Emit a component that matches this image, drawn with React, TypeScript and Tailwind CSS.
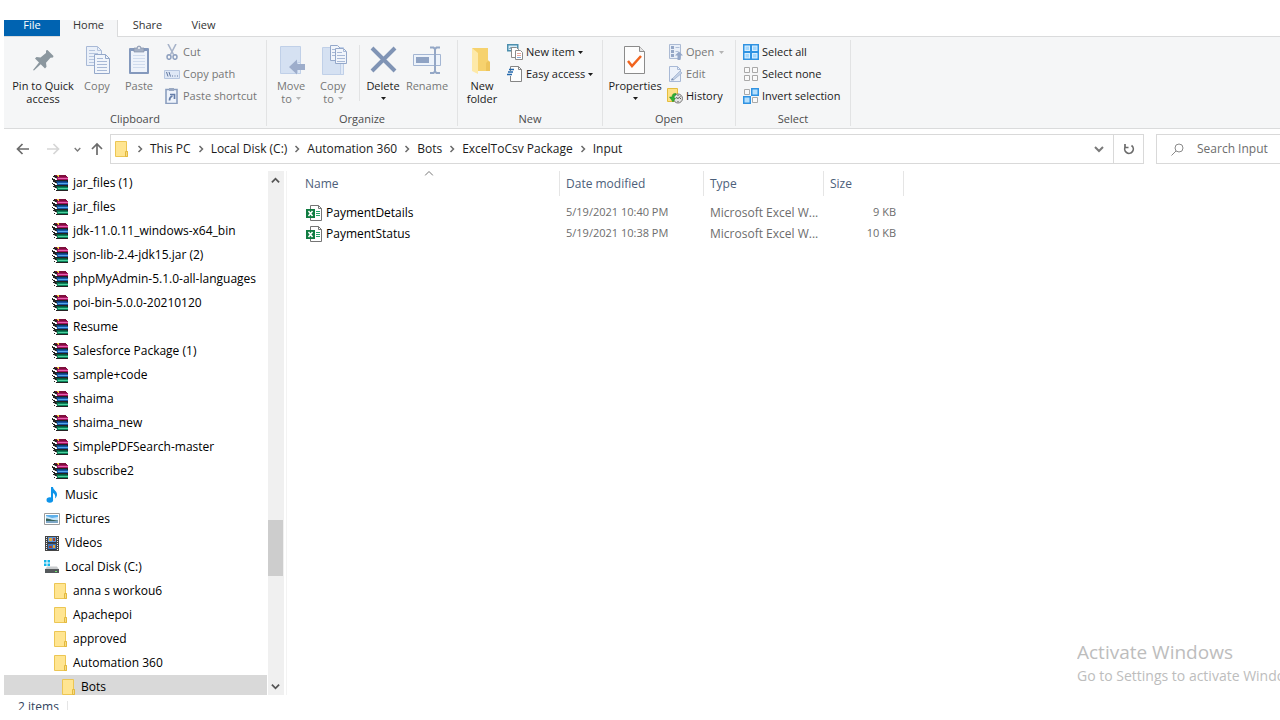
import React from 'react';

type IconType = React.FC;

interface TreeItem {
  name: string;
  icon: IconType;
  indent: string;
  selected?: boolean;
}

/* ---------- Ribbon icons ---------- */

const PinIcon = () => (
  <svg width="22" height="30" viewBox="0 0 22 30" fill="#8b979f">
    <path d="M1 25l6-7.500-4-4 1.500-1.500 4 .5L14 8V5.500L15.500 5l6 6-.5 1.500-2.500.3-4.500 5 .5 4L13 23.500l-4.300-4.300L2 25.500z" />
  </svg>
);

const CopyIcon = () => (
  <svg width="26" height="30" viewBox="0 0 26 30" fill="none">
    <path d="M2.500 1.500h11l4 4v15h-15z" fill="#eaf0f9" stroke="#a8b9d6" />
    <path d="M13.500 1.500v4h4M5 5.500h6M5 8.500h9M5 11.500h9M5 14.500h9M5 17.500h9" stroke="#b6c5de" />
    <path d="M10.500 9.500h11l4 4v15h-15z" fill="#f1f5fb" stroke="#94a8ca" />
    <path d="M21.500 9.500v4h4" stroke="#94a8ca" />
    <path d="M13 13.500h6M13 16.500h10M13 19.500h10M13 22.500h10M13 25.500h10" stroke="#a8b9d6" />
  </svg>
);

const PasteIcon = () => (
  <svg width="22" height="30" viewBox="0 0 22 30" fill="none">
    <rect x="1" y="3" width="20" height="26" rx="1" fill="#8499bd" />
    <rect x="3" y="6" width="16" height="21" fill="#eef3fb" />
    <path d="M5 10.500h12M5 13.500h12M5 16.500h12M5 19.500h12M5 22.500h12" stroke="#d0dcee" />
    <path d="M6 3h3a2 2 0 014 0h3v4H6z" fill="#a3afc4" stroke="#8592ac" strokeWidth=".7" />
    <circle cx="11" cy="3" r="1" fill="#f5f6f7" />
  </svg>
);

const MoveToIcon = () => (
  <svg width="28" height="30" viewBox="0 0 28 30">
    <path d="M3.500 1.500h20v27h-20z" fill="#d5e1f2" stroke="#c0d0e8" />
    <path d="M20.500 17.500h3v11h-3z" fill="#e0e9f6" stroke="#c0d0e8" />
    <path d="M12 22l8-7.500v4.500h8v6h-8v4.500z" fill="#9dadcb" />
  </svg>
);

const CopyToIcon = () => (
  <svg width="28" height="32" viewBox="0 0 28 32" fill="none">
    <path d="M3.500 3.500h21v27h-21z" fill="#d5e1f2" stroke="#c0d0e8" />
    <path d="M21.500 19.500h3v11h-3z" fill="#e0e9f6" stroke="#c0d0e8" />
    <path d="M11.500 1.500h7l3 3v12h-10z" fill="#f1f5fb" stroke="#94a8ca" />
    <path d="M13 5.500h4M13 8.500h4M13 11.500h4" stroke="#a8b9d6" />
    <path d="M16.500 4.500h8l3 3v12h-11z" fill="#f1f5fb" stroke="#94a8ca" />
    <path d="M24.500 4.500v3h3M18 8.500h5M18 11.500h8M18 14.500h8M18 17.500h8" stroke="#a8b9d6" />
  </svg>
);

const DeleteIcon = () => (
  <svg width="28" height="30" viewBox="0 0 28 30" fill="none">
    <path d="M3 3l23 23M26 3L3 26" stroke="#8094b5" strokeWidth="4" />
  </svg>
);

const RenameIcon = () => (
  <svg width="30" height="30" viewBox="0 0 30 30" fill="none">
    <path d="M1.500 9.500h27v11h-27z" fill="#edf3fb" stroke="#a4b6d3" />
    <path d="M4 12h13v6H4z" fill="#8fa3c4" />
    <path d="M18 2.500h3.500l1.500 1.500 1.500-1.500H28M18 28h3.500l1.500-1.500L24.500 28H28M23 3v24" stroke="#94a7c6" strokeWidth="2" />
  </svg>
);

const NewFolderIcon = () => (
  <svg width="22" height="30" viewBox="0 0 22 30">
    <path d="M1 3h16v12l2 2v9H5z" fill="#f6d26e" />
    <path d="M17 16l2 1v9h-4v-8z" fill="#edc45b" />
    <path d="M1 3l6 5v21l-6-3z" fill="#fde9a9" />
  </svg>
);

const PropertiesIcon = () => (
  <svg width="24" height="30" viewBox="0 0 24 30" fill="none">
    <path d="M1.500 1.500h15l5 5v22h-20z" fill="#fdfdfd" stroke="#8b8b8b" />
    <path d="M16.500 1.500v5h5" fill="#e4e4e4" stroke="#8b8b8b" />
    <path d="M5 16l4 5 9-10" stroke="#f1641e" strokeWidth="2.500" />
  </svg>
);

const CutIcon = () => (
  <svg width="16" height="16" viewBox="0 0 16 16" fill="none" stroke="#8d9fbe">
    <path d="M4 0l5.500 10.500M12 0L6.500 10.500" strokeWidth="1.600" stroke="#a7b3c9" />
    <ellipse cx="5" cy="13" rx="2" ry="2.300" strokeWidth="1.500" />
    <ellipse cx="11" cy="13" rx="2" ry="2.300" strokeWidth="1.500" />
  </svg>
);

const CopyPathIcon = () => (
  <svg width="16" height="16" viewBox="0 0 16 16" fill="none">
    <path d="M.5 4.500h15v8H.5z" fill="#dfe8f6" stroke="#b7c6df" />
    <path d="M2.500 6l1.500 4.500M5 6l1.500 4.500" stroke="#60779f" />
    <path d="M8 10h1M10.500 10h1M13 10h1" stroke="#60779f" />
  </svg>
);

const PasteShortcutIcon = () => (
  <svg width="16" height="16" viewBox="0 0 16 16" fill="none">
    <path d="M2 1.500h11v14H2z" fill="#eef3fb" stroke="#8b9ebf" strokeWidth="1.600" />
    <path d="M5 0h5v3H5z" fill="#9aa9c2" />
    <path d="M5.500 12.500c0-3 1-4 3-4.500M6 6.500h4.500V11" stroke="#647da8" strokeWidth="1.700" />
  </svg>
);

const NewItemIcon = () => (
  <svg width="16" height="16" viewBox="0 0 16 16" fill="none">
    <path d="M.75.75h10v6h-10z" fill="#d6eefa" stroke="#4c8fae" strokeWidth="1.500" />
    <path d="M2.500 5l2-2 2 2 1.500-1.500" stroke="#3c7796" />
    <path d="M4.500 3.500h5l2 2v8h-7z" fill="#fff" stroke="#8b8b8b" />
    <path d="M8.500 6.500h5l2 2v7h-7z" fill="#fff" stroke="#8b8b8b" />
    <path d="M10 9.500h4M10 11.500h4" stroke="#e7a59d" />
    <path d="M10 13.500h4" stroke="#89abd8" />
  </svg>
);

const EasyAccessIcon = () => (
  <svg width="16" height="16" viewBox="0 0 16 16" fill="none">
    <path d="M3.500 5V.5h8l3 3v12h-11V10" fill="#fdfdfd" stroke="#858585" />
    <path d="M11.500.5v3h3" stroke="#858585" />
    <path d="M2 3.500h5M1 6h5M0 8.500h5" stroke="#2267ad" strokeWidth="1.300" />
  </svg>
);

const OpenIcon = () => (
  <svg width="16" height="16" viewBox="0 0 16 16" fill="none">
    <path d="M2.500.5h11v14h-11z" fill="#e9eff8" stroke="#acbbd4" />
    <path d="M4 2h3v3H4zM4 6h3v3H4zM4 10h3v3H4z" fill="#94a6c5" />
    <path d="M8.500 3.500h4M8.500 7.500h3" stroke="#b0bfd8" />
    <path d="M12 7.500l4 4h-2.500V16h-3v-4.500H8z" fill="#94a7c8" />
  </svg>
);

const EditIcon = () => (
  <svg width="16" height="16" viewBox="0 0 16 16" fill="none">
    <path d="M2.500.5h8l3 3v12h-11z" fill="#edf2fa" stroke="#a8b9d6" />
    <path d="M10.500.5v3h3" stroke="#a8b9d6" />
    <path d="M4.500 13.500L13 5l2 2-8.500 7z" fill="#c2d0e6" stroke="#a5b5cf" strokeWidth=".8" />
    <path d="M4 14.500l1-2.500 2 2z" fill="#7f92b3" />
  </svg>
);

const HistoryIcon = () => (
  <svg width="16" height="16" viewBox="0 0 16 16" fill="none">
    <path d="M.5.5h10v13H.5z" fill="#fde186" stroke="#e5bd3e" />
    <circle cx="11" cy="10.500" r="4.500" fill="#e3e3e3" stroke="#777" />
    <path d="M11 10.500l2.500-2M11 10.500l-2-1M11 7v1M11 13v1M14 10.500h-1" stroke="#555" />
    <path d="M9 5.500C6 5 5 7 5 9H2.500L6 14l2.500-4H7c0-2 .5-3 2-3z" fill="#2eb135" stroke="#188a25" strokeWidth=".5" />
  </svg>
);

const SelectAllIcon = () => (
  <svg width="16" height="16" viewBox="0 0 16 16">
    <path d="M0 0h16v16H0z" fill="#3093e2" />
    <path d="M1.500 1.500h5.500v5.500H1.500zM9 1.500h5.500v5.500H9zM1.500 9h5.500v5.500H1.500zM9 9h5.500v5.500H9z" fill="#d9efff" />
    <path d="M2.500 2.500h3.500v3.500H2.500zM10 2.500h3.500v3.500H10zM2.500 10h3.500v3.500H2.500zM10 10h3.500v3.500H10z" fill="#a3d7fd" />
  </svg>
);

const SelectNoneIcon = () => (
  <svg width="16" height="16" viewBox="0 0 16 16" fill="#fafafa" stroke="#a9a9a9">
    <path d="M1.500 1.500h5v5h-5zM9.500 1.500h5v5h-5zM1.500 9.500h5v5h-5zM9.500 9.500h5v5h-5z" />
  </svg>
);

const InvertIcon = () => (
  <svg width="16" height="16" viewBox="0 0 16 16">
    <path d="M1.500 1.500h5v5h-5zM9.500 9.500h5v5h-5z" fill="#fafafa" stroke="#a9a9a9" />
    <path d="M8.750.75h6.500v6.500h-6.500zM.75 8.750h6.500v6.500H.75z" fill="#b5dffd" stroke="#3093e2" strokeWidth="1.500" />
  </svg>
);

/* ---------- Tree and file icons ---------- */

const RarIcon = () => (
  <svg width="16" height="16" viewBox="0 0 16 16" shapeRendering="crispEdges">
    {/* three stacked books, pages on the left and spines on the right */}
    <path d="M2 0h12v1h1v1h1v14H4v-1H2v-1H1v-3h1v-1H1V9H0V7h1V5H0V2h1V1h1z" fill="#222" />
    <path d="M3 0h11v1h1v1H5V1H3z" fill="#7d0f3c" />
    <path d="M5 2h11v3H5z" fill="#a5135f" />
    <path d="M6 3h10v1H6z" fill="#e263ac" />
    <path d="M4 6h11v1H4z" fill="#0c3d7c" />
    <path d="M5 7h11v3H5z" fill="#1658a4" />
    <path d="M6 8h10v1H6z" fill="#57a5ea" />
    <path d="M4 11h11v1H4z" fill="#05573c" />
    <path d="M5 12h11v3H5z" fill="#0b8058" />
    <path d="M6 13h10v1H6z" fill="#4bd09e" />
    <path d="M0 2h2v1h2v1h1v1H3V4H1V3H0zM0 7h2v1h2v1h1v1H3V9H1V8H0zM1 12h1v1h2v1h1v1H3v-1H1z" fill="#fff" />
    <path d="M2 2h1v1h2v1H4V3H2zM2 7h1v1h2v1H4V8H2zM2 12h1v1h2v1H4v-1H2z" fill="#b5b5b5" />
    <path d="M5 0h2v1H5zM6 1h1v1H6z" fill="#ecd03c" />
  </svg>
);

const FolderIcon = () => (
  <svg width="16" height="16" viewBox="0 0 16 16">
    <path d="M2.500.5h11v9.500l1 .5v5h-12z" fill="#ffe591" stroke="#ecc654" />
    <path d="M12.500 15.500v-5h2v5z" fill="#f8dc82" stroke="#e3b93f" />
  </svg>
);

const MusicIcon = () => (
  <svg width="16" height="16" viewBox="0 0 16 16" fill="#0e94ea">
    <path d="M7 0h2c0 3 4.500 4 4 8-.2 1.500-1 2.500-2 3.500.8-3-.3-4.500-2-5.500V13H7z" />
    <ellipse cx="5.800" cy="13" rx="3.300" ry="2.700" />
  </svg>
);

const PicturesIcon = () => (
  <svg width="16" height="16" viewBox="0 0 16 16">
    <path d="M.5 2.500h15v11H.5z" fill="#fff" stroke="#9b9b9b" />
    <path d="M2 4h12v8H2z" fill="#c7e6fb" />
    <path d="M2 4h12v2l-6 1-6-2z" fill="#5fb0ea" />
    <path d="M2 7.500c3 0 5 1.500 12 2V10H2z" fill="#37635a" />
    <path d="M2 10h12v2H2z" fill="#7ea7c7" />
  </svg>
);

const VideosIcon = () => (
  <svg width="16" height="16" viewBox="0 0 16 16" shapeRendering="crispEdges">
    <path d="M1 1h14v15H1z" fill="#454545" />
    <path d="M2 2h1v1H2zM2 4h1v1H2zM2 6h1v1H2zM2 8h1v1H2zM2 10h1v1H2zM2 12h1v1H2zM2 14h1v1H2zM13 2h1v1h-1zM13 4h1v1h-1zM13 6h1v1h-1zM13 8h1v1h-1zM13 10h1v1h-1zM13 12h1v1h-1zM13 14h1v1h-1z" fill="#eee" />
    <path d="M4 2h8v6H4z" fill="#5d95d9" />
    <path d="M4 9h8v6H4z" fill="#3e74bd" />
    <path d="M5 3h3v3H5zM9 10h2v3H9z" fill="#e2a83a" />
    <path d="M9 3h2v3H9zM5 11h3v2H5z" fill="#a8442d" />
    <path d="M4 7h8v1H4zM4 14h8v1H4z" fill="#26364f" />
  </svg>
);

const DiskIcon = () => (
  <svg width="16" height="16" viewBox="0 0 16 16">
    <path d="M0 1h2.500v2.500H0zM3.500 1H6v2.500H3.500zM0 4.500h2.500V7H0zM3.500 4.500H6V7H3.500z" fill="#12b5ea" />
    <path d="M3 7.500h10l2 3H1z" fill="#c9cbcd" />
    <path d="M1 10h14v4H1z" fill="#55595c" />
    <path d="M11 12h2v1h-2z" fill="#6fe36f" />
  </svg>
);

const ExcelIcon = () => (
  <svg width="16" height="16" viewBox="0 0 16 16" fill="none">
    <path d="M4.500.5h8l3 3v12h-11z" fill="#fff" stroke="#757575" />
    <path d="M12.500.5v3h3" stroke="#757575" />
    <path d="M10 6.500h4M10 8.500h4M10 10.500h4" stroke="#21a366" />
    <path d="M0 4h9v9H0z" fill="#107c41" />
    <path d="M2.500 6l4 5M6.500 6l-4 5" stroke="#fff" strokeWidth="1.500" />
  </svg>
);

/* ---------- Small glyphs ---------- */

const Caret = ({ className = '' }: { className?: string }) => (
  <svg width="5" height="3" viewBox="0 0 5 3" className={className} fill="currentColor"><path d="M0 0h5L2.500 3z" /></svg>
);

const Chevron = ({ d, size = 10, width = 2 }: { d: string; size?: number; width?: number }) => (
  <svg width={size} height={size} viewBox="0 0 10 10" fill="none" stroke="currentColor" strokeWidth={width}><path d={d} /></svg>
);

const RIGHT = 'M3.500 2l3 3-3 3';
const DOWN = 'M1 3l4 4 4-4';
const UP = 'M1 7l4-4 4 4';

/* ---------- Ribbon pieces ---------- */

interface BigProps {
  icon: IconType;
  lines: string[];
  width: string;
  caret?: boolean;
  disabled?: boolean;
}

const BigButton = ({ icon: Icon, lines, width, caret, disabled }: BigProps) => (
  <button type="button" disabled={disabled} className={`${width} h-[66px] flex flex-col items-center text-center leading-[13px] whitespace-nowrap ${disabled ? 'text-[#767676]' : 'text-[#1b1b1b]'}`}>
    <span className="h-[30px] mb-1 flex items-center justify-center"><Icon /></span>
    {lines.map((line, i) => (
      <span key={line} className="flex items-center gap-1">
        {line}
        {caret && i === 1 && <Caret className="text-[#b4b4b4]" />}
      </span>
    ))}
    {caret && lines.length === 1 && <span className="h-[13px] flex items-center"><Caret /></span>}
  </button>
);

const SmallButton = ({ icon: Icon, label, caret, disabled }: { icon: IconType; label: string; caret?: boolean; disabled?: boolean }) => (
  <button type="button" disabled={disabled} className={`h-[22px] flex items-center gap-[3px] whitespace-nowrap ${disabled ? 'text-[#767676]' : 'text-[#1b1b1b]'}`}>
    <Icon />
    <span>{label}</span>
    {caret && <Caret className={disabled ? 'ml-[2px] text-[#b4b4b4]' : ''} />}
  </button>
);

const Group = ({ label, width, children }: { label: string; width: string; children: React.ReactNode }) => (
  <section aria-label={label} className={`${width} shrink-0 mt-[3px] mb-[2px] flex flex-col border-r border-[#e2e3e4]`}>
    <div className="flex flex-1 pt-px">{children}</div>
    <div className="h-[14px] leading-[14px] text-center text-[#4b4b4b]">{label}</div>
  </section>
);

const Ribbon = () => (
  <div className="h-[92px] shrink-0 flex bg-[#f5f6f7] border-b border-[#dadbdc] text-[11px]">
    <Group label="Clipboard" width="w-[263px]">
      <div className="flex pl-1 pt-1">
        <BigButton icon={PinIcon} lines={['Pin to Quick', 'access']} width="w-[70px]" />
        <BigButton icon={CopyIcon} lines={['Copy']} width="w-[38px]" disabled />
        <BigButton icon={PasteIcon} lines={['Paste']} width="w-[46px]" disabled />
      </div>
      <div className="pl-[2px]">
        <SmallButton icon={CutIcon} label="Cut" disabled />
        <SmallButton icon={CopyPathIcon} label="Copy path" disabled />
        <SmallButton icon={PasteShortcutIcon} label="Paste shortcut" disabled />
      </div>
    </Group>
    <Group label="Organize" width="w-[191px]">
      <div className="flex pl-[3px] pt-1">
        <BigButton icon={MoveToIcon} lines={['Move', 'to']} width="w-[42px]" caret disabled />
        <BigButton icon={CopyToIcon} lines={['Copy', 'to']} width="w-[42px]" caret disabled />
        <div className="w-px h-14 ml-[5px] mr-[2px] bg-[#e2e3e4]" />
        <BigButton icon={DeleteIcon} lines={['Delete']} width="w-[42px]" caret />
        <BigButton icon={RenameIcon} lines={['Rename']} width="w-[46px]" disabled />
      </div>
    </Group>
    <Group label="New" width="w-[145px]">
      <div className="flex pl-[3px] pt-1">
        <BigButton icon={NewFolderIcon} lines={['New', 'folder']} width="w-[42px]" />
      </div>
      <div className="pl-[4px]">
        <SmallButton icon={NewItemIcon} label="New item" caret />
        <SmallButton icon={EasyAccessIcon} label="Easy access" caret />
      </div>
    </Group>
    <Group label="Open" width="w-[133px]">
      <div className="flex pl-[5px] pt-1">
        <BigButton icon={PropertiesIcon} lines={['Properties']} width="w-[54px]" caret />
      </div>
      <div className="pl-[5px]">
        <SmallButton icon={OpenIcon} label="Open" caret disabled />
        <SmallButton icon={EditIcon} label="Edit" disabled />
        <SmallButton icon={HistoryIcon} label="History" />
      </div>
    </Group>
    <Group label="Select" width="w-[115px]">
      <div className="pl-[7px]">
        <SmallButton icon={SelectAllIcon} label="Select all" />
        <SmallButton icon={SelectNoneIcon} label="Select none" />
        <SmallButton icon={InvertIcon} label="Invert selection" />
      </div>
    </Group>
  </div>
);

const Tabs = () => (
  <nav className="h-[17px] shrink-0 flex items-stretch text-[11px] leading-[10px] text-[#333]">
    <button type="button" className="w-14 pb-[7px] bg-[#0063b1] text-white border-b border-[#dadbdc]">File</button>
    <button type="button" className="w-[58px] pb-[7px] bg-[#f5f6f7] border-r border-[#dadbdc]">Home</button>
    <button type="button" className="w-[59px] pb-[7px] border-b border-[#dadbdc]">Share</button>
    <button type="button" className="w-[53px] pb-[7px] border-b border-[#dadbdc]">View</button>
    <div className="flex-1 border-b border-[#dadbdc]" />
  </nav>
);

const crumbs = ['This PC', 'Local Disk (C:)', 'Automation 360', 'Bots', 'ExcelToCsv Package', 'Input'];

const AddressBar = () => (
  <div className="h-[40px] mb-[2px] shrink-0 flex items-center pl-[5px] text-[12px] text-[#1b1b1b]">
    <button type="button" aria-label="Back" className="w-7 flex justify-center text-[#6b6b6b]">
      <svg width="14" height="12" viewBox="0 0 14 12" fill="none" stroke="currentColor" strokeWidth="1.700"><path d="M13 6H2M6.500 1l-5 5 5 5" /></svg>
    </button>
    <button type="button" aria-label="Forward" className="w-8 flex justify-center text-[#d6d6d6]">
      <svg width="14" height="12" viewBox="0 0 14 12" fill="none" stroke="currentColor" strokeWidth="1.700"><path d="M1 6h11M7.500 1l5 5-5 5" /></svg>
    </button>
    <button type="button" aria-label="Recent locations" className="w-4 flex justify-center text-[#7a7a7a]"><Chevron d={DOWN} size={7} /></button>
    <button type="button" aria-label="Up" className="w-6 flex justify-center text-[#6b6b6b]">
      <svg width="12" height="14" viewBox="0 0 12 14" fill="none" stroke="currentColor" strokeWidth="1.700"><path d="M6 13V2M1 7l5-5 5 5" /></svg>
    </button>
    <div className="h-[30px] flex-1 ml-px mr-3 flex items-center border border-[#d9d9d9] whitespace-nowrap">
      <span className="w-[19px] shrink-0 pl-[2px]"><FolderIcon /></span>
      {crumbs.map(c => (
        <React.Fragment key={c}>
          <span className="w-5 shrink-0 flex justify-center text-[#6b6b6b]"><Chevron d={RIGHT} size={10} width={1.5} /></span>
          <button type="button">{c}</button>
        </React.Fragment>
      ))}
      <button type="button" aria-label="Previous locations" className="ml-auto w-7 flex justify-center text-[#7a7a7a]"><Chevron d={DOWN} size={10} /></button>
      <button type="button" aria-label="Refresh" className="w-[30px] h-full flex items-center justify-center border-l border-[#d9d9d9] text-[#6b6b6b]">
        <svg width="12" height="12" viewBox="0 0 12 12" fill="none" stroke="currentColor" strokeWidth="1.700"><path d="M8.500 2.500A4.300 4.300 0 112.500 3.500M2 1v3.500h3.500" /></svg>
      </button>
    </div>
    <label className="h-[30px] w-[124px] flex items-center pl-[14px] border border-r-0 border-[#d9d9d9]">
      <svg width="13" height="13" viewBox="0 0 13 13" fill="none" stroke="#8a8a8a"><circle cx="8" cy="5" r="4" /><path d="M5 8l-4.500 4.500" /></svg>
      <input type="text" aria-label="Search Input" placeholder="Search Input" className="min-w-0 flex-1 ml-[13px] outline-none bg-transparent placeholder:text-[#6d6d6d]" />
    </label>
  </div>
);

/* ---------- Navigation tree ---------- */

const archives = ['jar_files (1)', 'jar_files', 'jdk-11.0.11_windows-x64_bin', 'json-lib-2.4-jdk15.jar (2)', 'phpMyAdmin-5.1.0-all-languages', 'poi-bin-5.0.0-20210120', 'Resume', 'Salesforce Package (1)', 'sample+code', 'shaima', 'shaima_new', 'SimplePDFSearch-master', 'subscribe2'];

const tree: TreeItem[] = [
  ...archives.map(name => ({ name, icon: RarIcon, indent: 'pl-12' })),
  { name: 'Music', icon: MusicIcon, indent: 'pl-10' },
  { name: 'Pictures', icon: PicturesIcon, indent: 'pl-10' },
  { name: 'Videos', icon: VideosIcon, indent: 'pl-10' },
  { name: 'Local Disk (C:)', icon: DiskIcon, indent: 'pl-10' },
  { name: 'anna s workou6', icon: FolderIcon, indent: 'pl-12' },
  { name: 'Apachepoi', icon: FolderIcon, indent: 'pl-12' },
  { name: 'approved', icon: FolderIcon, indent: 'pl-12' },
  { name: 'Automation 360', icon: FolderIcon, indent: 'pl-12' },
  { name: 'Bots', icon: FolderIcon, indent: 'pl-14', selected: true },
];

const Sidebar = () => (
  <aside className="w-[283px] shrink-0 flex border-r border-[#f3f3f3]">
    <ul className="flex-1 min-w-0 overflow-hidden text-[12px] text-black">
      {tree.map(({ name, icon: Icon, indent, selected }) => (
        <li key={name}>
          <button type="button" className={`w-full h-6 flex items-center gap-[5px] whitespace-nowrap ${indent} ${selected ? 'bg-[#d9d9d9]' : ''}`}>
            <Icon />
            <span>{name}</span>
          </button>
        </li>
      ))}
    </ul>
    {/* Scrollbar */}
    <div className="w-4 ml-px mr-[2px] flex flex-col bg-[#f0f0f0] text-[#555]">
      <span className="h-[18px] pr-px flex items-center justify-center"><Chevron d={UP} size={9} /></span>
      <div className="flex-[331] basis-0" />
      <div className="mr-px h-14 bg-[#cdcdcd]" />
      <div className="flex-[101] basis-0" />
      <span className="h-[18px] pr-px flex items-center justify-center"><Chevron d={DOWN} size={9} /></span>
    </div>
  </aside>
);

/* ---------- File list ---------- */

const columns = [
  { name: 'Name', width: 'w-[261px]' },
  { name: 'Date modified', width: 'w-36' },
  { name: 'Type', width: 'w-[120px]' },
  { name: 'Size', width: 'w-20' },
];

const files = [
  { name: 'PaymentDetails', date: '5/19/2021 10:40 PM', type: 'Microsoft Excel W...', size: '9 KB' },
  { name: 'PaymentStatus', date: '5/19/2021 10:38 PM', type: 'Microsoft Excel W...', size: '10 KB' },
];

const FileList = () => (
  <main className="flex-1 min-w-0 pl-3">
    <table className="table-fixed w-[605px] text-[12px] text-left whitespace-nowrap">
      <thead>
        <tr>
          {columns.map(c => (
            <th key={c.name} className={`${c.width} p-0 pb-[6px] font-normal text-[#4c607a]`}>
              <div className="relative h-[25px] pl-[6px] flex items-center border-r border-[#e5e5e5]">
                {c.name}
                {c.name === 'Name' && (
                  <svg width="9" height="5" viewBox="0 0 9 5" className="absolute left-1/2 top-0 -translate-x-1/2" fill="none" stroke="#777"><path d="M.5 4.500l4-4 4 4" /></svg>
                )}
              </div>
            </th>
          ))}
        </tr>
      </thead>
      <tbody>
        {files.map(f => (
          <tr key={f.name} className="h-[21px] text-[#6d6d6d]">
            <td className="p-0 pl-[7px] text-black"><div className="flex items-center gap-[4px]"><ExcelIcon />{f.name}</div></td>
            <td className="p-0 pl-[6px] text-[11px]">{f.date}</td>
            <td className="p-0 pl-[6px]">{f.type}</td>
            <td className="p-0 pr-2 text-right text-[11px]">{f.size}</td>
          </tr>
        ))}
      </tbody>
    </table>
  </main>
);

const App: React.FC = () => (
  <div className="relative h-screen pt-5 pb-[10px] pl-1 flex flex-col overflow-hidden bg-white font-['Open_Sans','Noto_Sans',sans-serif]">
    <Tabs />
    <Ribbon />
    <AddressBar />
    <div className="flex-1 min-h-0 flex">
      <Sidebar />
      <FileList />
    </div>
    <footer className="h-[15px] shrink-0 pl-[14px] flex overflow-hidden text-[12px] leading-6 text-[#31445e]">
      <span className="pr-2">2 items</span>
      <span className="w-px mt-[6px] bg-[#e5e5e5]" />
    </footer>

    {/* Activation watermark */}
    <div className="absolute right-0 bottom-8 w-[203px] overflow-hidden whitespace-nowrap text-[#bdbdbd] pointer-events-none">
      <p className="text-[19px] leading-6">Activate Windows</p>
      <p className="text-[14px] leading-6">Go to Settings to activate Windows.</p>
    </div>
  </div>
);

export default App;
